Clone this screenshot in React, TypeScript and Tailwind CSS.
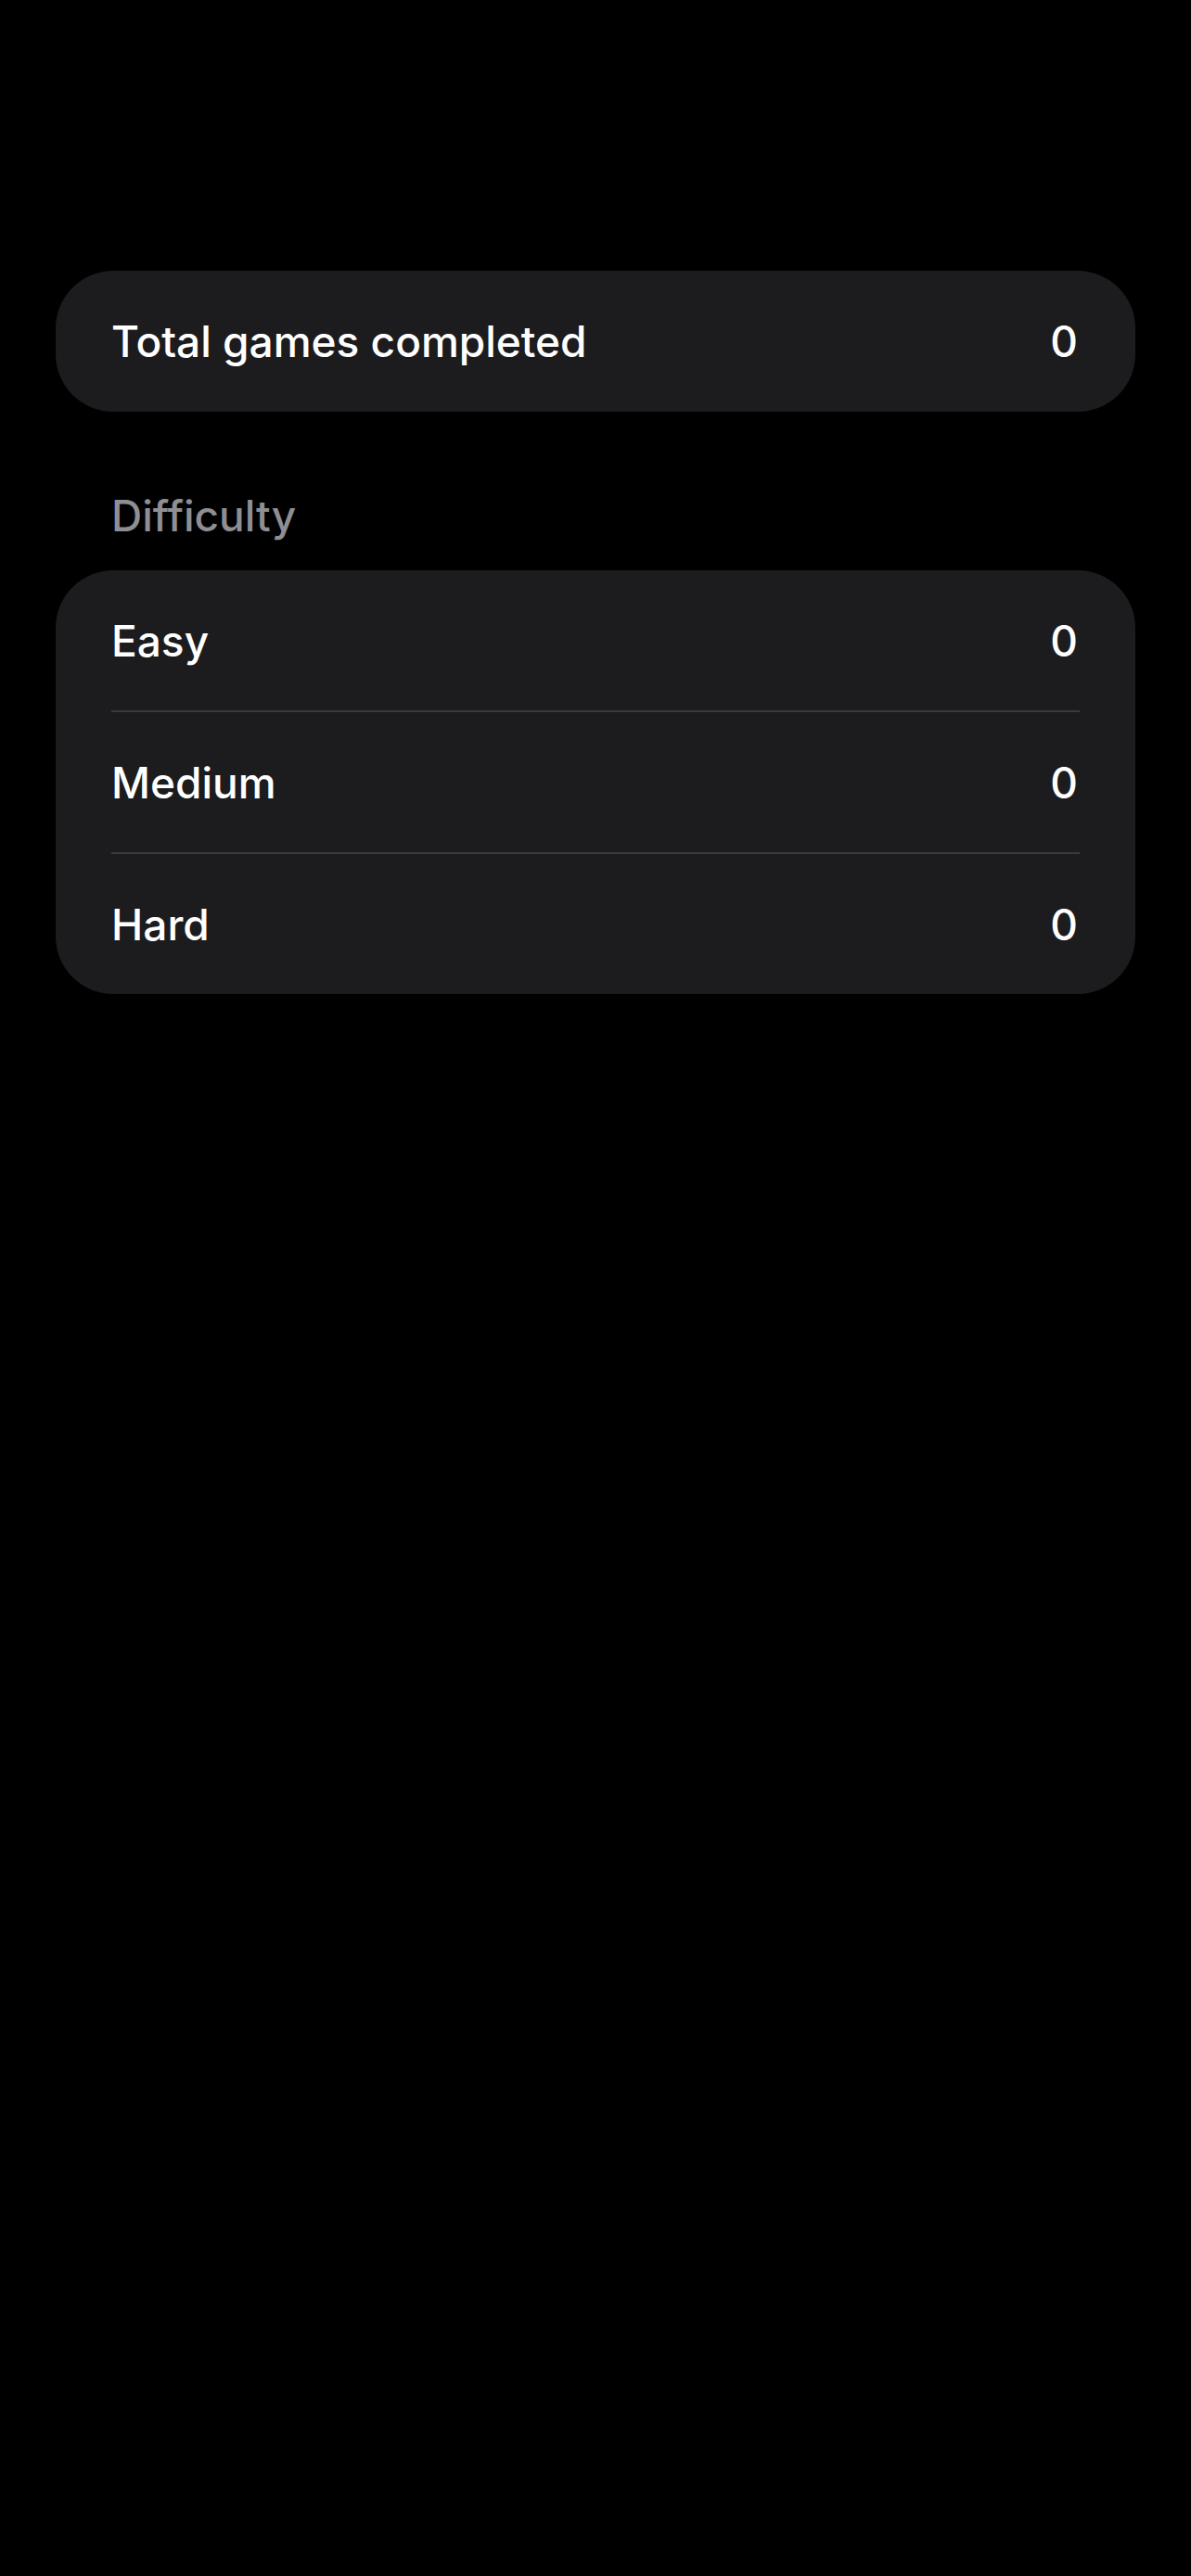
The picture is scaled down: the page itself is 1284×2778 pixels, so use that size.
import React from "react";

const DIFFICULTY = [
  { label: "Easy", value: 0 },
  { label: "Medium", value: 0 },
  { label: "Hard", value: 0 },
];

function Row({ label, value }: { label: string; value: number }) {
  return (
    <div className="flex h-[151px] items-center justify-between pl-[60px] pr-[62px]">
      <span className="text-[46px] font-medium leading-[56px] text-white">{label}</span>
      <span className="text-[46px] font-medium leading-[56px] text-white">{value}</span>
    </div>
  );
}

export default function App() {
  return (
    <div
      className="min-h-[2778px] w-full bg-black px-[60px] pt-[292px]"
      style={{ fontFamily: "Inter, 'Noto Sans', sans-serif" }}
    >
      {/* Total */}
      <section className="flex h-[152px] items-center justify-between rounded-[62px] bg-[#1c1c1e] pl-[60px] pr-[62px]">
        <span className="text-[46px] font-medium leading-[56px] text-white">Total games completed</span>
        <span className="text-[46px] font-medium leading-[56px] text-white">0</span>
      </section>

      {/* Difficulty */}
      <p className="mt-[84px] pl-[60px] text-[46px] font-medium leading-[56px] text-[#8e8e93]">Difficulty</p>
      <section className="mt-[31px] overflow-hidden rounded-[62px] bg-[#1c1c1e]">
        {DIFFICULTY.map((d, i) => (
          <div key={d.label}>
            {i > 0 && <div className="mx-[60px] h-[2px] bg-[#3a3a3c]" />}
            <Row label={d.label} value={d.value} />
          </div>
        ))}
      </section>
    </div>
  );
}
